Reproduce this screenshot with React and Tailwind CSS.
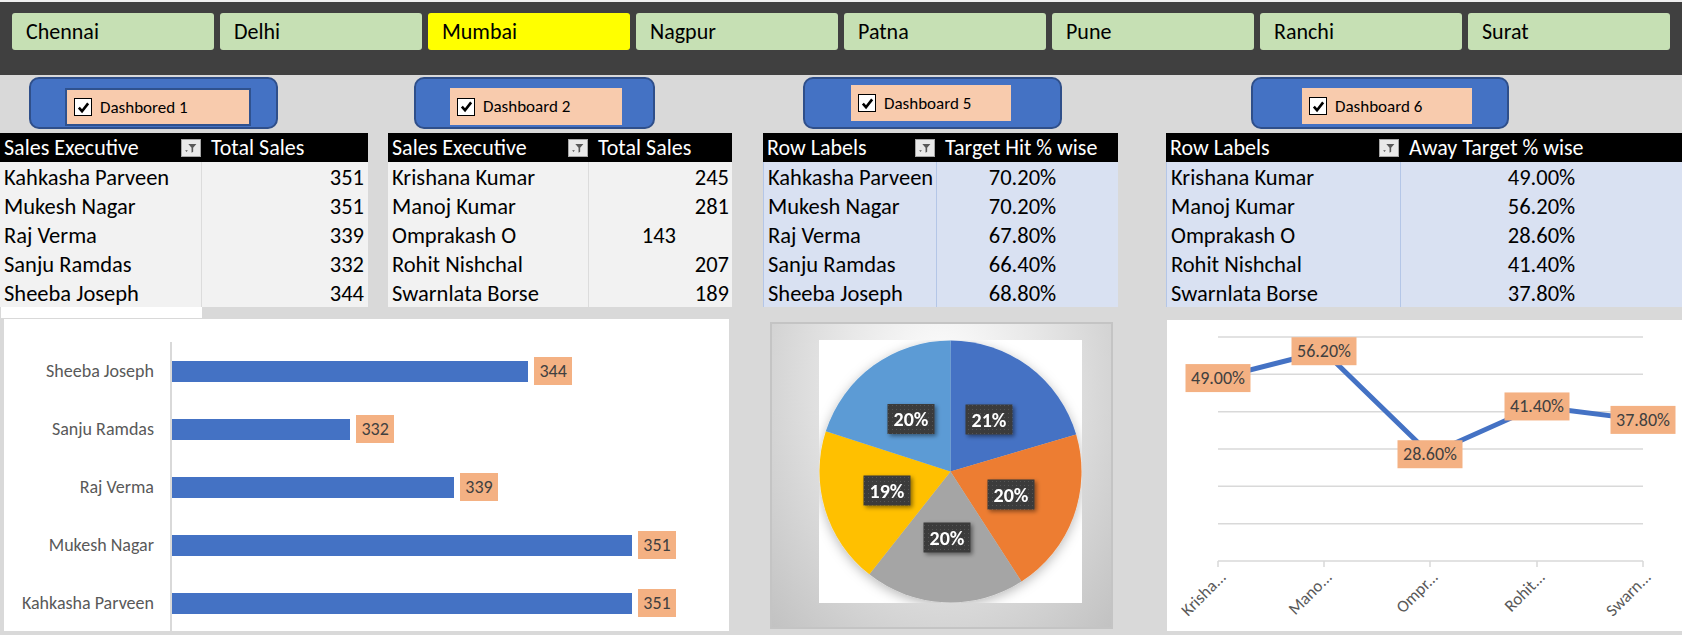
import React from 'react';

const cities = ['Chennai', 'Delhi', 'Mumbai', 'Nagpur', 'Patna', 'Pune', 'Ranchi', 'Surat'];

const dashboards = [
  { label: 'Dashbored 1', box: 'ml-[29px] w-[249px]', inner: 'ml-[34px] mt-[9px] w-[186px] h-[38px] border-2 border-[#2f528f]' },
  { label: 'Dashboard 2', box: 'ml-[136px] w-[241px]', inner: 'ml-[34px] mt-[9px] w-[172px] h-[37px]' },
  { label: 'Dashboard 5', box: 'ml-[148px] w-[259px]', inner: 'ml-[46px] mt-[6px] w-[160px] h-[36px]' },
  { label: 'Dashboard 6', box: 'ml-[189px] w-[258px]', inner: 'ml-[49px] mt-[9px] w-[170px] h-[36px]' },
];

const sales1 = [
  ['Kahkasha Parveen', 351],
  ['Mukesh Nagar', 351],
  ['Raj Verma', 339],
  ['Sanju Ramdas', 332],
  ['Sheeba Joseph', 344],
];
const sales2 = [
  ['Krishana Kumar', 245],
  ['Manoj Kumar', 281],
  ['Omprakash O', 143],
  ['Rohit Nishchal', 207],
  ['Swarnlata Borse', 189],
];
const hit = [
  ['Kahkasha Parveen', '70.20%'],
  ['Mukesh Nagar', '70.20%'],
  ['Raj Verma', '67.80%'],
  ['Sanju Ramdas', '66.40%'],
  ['Sheeba Joseph', '68.80%'],
];
const away = [
  ['Krishana Kumar', 49.0],
  ['Manoj Kumar', 56.2],
  ['Omprakash O', 28.6],
  ['Rohit Nishchal', 41.4],
  ['Swarnlata Borse', 37.8],
];

const CheckBox = () => (
  <span className="flex h-[18px] w-[18px] shrink-0 items-center justify-center border border-black bg-white">
    <svg viewBox="0 0 14 14" className="h-[13px] w-[13px]">
      <path d="M2 7.2 L5.4 11 L12 2.6" fill="none" stroke="black" strokeWidth="2.8" />
    </svg>
  </span>
);

const FilterBtn = () => (
  <span className="flex h-[18px] w-[20px] shrink-0 items-center justify-center border border-[#a6a6a6] bg-[#e9e9e9]">
    <svg viewBox="0 0 20 18" className="h-[18px] w-[20px]">
      <path d="M7 4.5h9l-3.6 4.2v4.6l-1.8 1V8.7z" fill="#595959" />
      <path d="M3.5 11.5h3l-1.5 2z" fill="#595959" />
    </svg>
  </span>
);

function PivotTable({ wrap, nameW, valW, head1, head2, rows, blue, valAlign, valPad }) {
  return (
    <div className={wrap}>
      <div className="flex h-[29px] items-center bg-black text-white">
        <div className={`flex h-full items-center justify-between pl-[4px] pr-[1px] ${nameW}`}>
          <span className="whitespace-nowrap">{head1}</span>
          <FilterBtn />
        </div>
        <div className={`flex h-full items-center whitespace-nowrap pl-[9px] ${valW}`}>{head2}</div>
      </div>
      {rows.map(([name, val], i) => (
        <div
          key={name}
          className={`flex h-[29px] items-center text-[22.5px] ${blue ? 'border-l border-[#b4c6e7] bg-[#d9e1f2]' : 'bg-[#f2f2f2]'}`}
        >
          <div
            className={`flex h-full shrink-0 items-center whitespace-nowrap pl-[4px] pt-[3px] ${nameW} ${blue ? 'border-r border-[#b4c6e7]' : 'border-r border-[#dcdcdc]'}`}
          >
            {name}
          </div>
          <div
            className={`flex h-full items-center pt-[3px] ${valW} ${valAlign} ${valPad && i === 2 ? 'pr-[56px]' : valPad ? 'pr-[3px]' : ''}`}
          >
            {typeof val === 'number' && blue ? `${val.toFixed(2)}%` : val}
          </div>
        </div>
      ))}
    </div>
  );
}

function BarChart() {
  const data = [
    ['Sheeba Joseph', 344],
    ['Sanju Ramdas', 332],
    ['Raj Verma', 339],
    ['Mukesh Nagar', 351],
    ['Kahkasha Parveen', 351],
  ];
  return (
    <div className="ml-[3px] h-[314px] w-[727px] border border-[#d9d9d9] bg-white pt-[23px]">
      {data.map(([name, v]) => (
        <div key={name} className="flex h-[58px] items-center">
          <div className="w-[150px] text-right text-[18px] text-[#595959]">{name}</div>
          <div className="ml-[16px] flex h-full items-center border-l-2 border-[#d9d9d9]">
            <div className="h-[21px] bg-[#4472c4]" style={{ width: `${(v - 320) * 14.84}px` }} />
            <div className="ml-[6px] flex h-[28px] w-[38px] items-center justify-center bg-[#f4b183] text-[18px] text-[#404040]">
              {v}
            </div>
          </div>
        </div>
      ))}
    </div>
  );
}

function PieChart() {
  const vals = [351, 351, 339, 332, 344];
  const colors = ['#4472c4', '#ed7d31', '#a5a5a5', '#ffc000', '#5b9bd5'];
  const labels = [
    ['21%', 38.5, -52],
    ['20%', 60.5, 23],
    ['20%', -3.5, 66],
    ['19%', -63.5, 19],
    ['20%', -39.5, -52.5],
  ];
  const total = vals.reduce((a, b) => a + b, 0);
  const c = 131.5;
  const r = 131;
  let acc = 0;
  const slices = vals.map((v, i) => {
    const a0 = (acc / total) * Math.PI * 2;
    acc += v;
    const a1 = (acc / total) * Math.PI * 2;
    const x0 = c + r * Math.sin(a0);
    const y0 = c - r * Math.cos(a0);
    const x1 = c + r * Math.sin(a1);
    const y1 = c - r * Math.cos(a1);
    const large = a1 - a0 > Math.PI ? 1 : 0;
    return (
      <path key={i} d={`M${c} ${c} L${x0} ${y0} A${r} ${r} 0 ${large} 1 ${x1} ${y1} Z`} fill={colors[i]} />
    );
  });
  return (
    <div className="ml-[40px] mt-[4px] h-[307px] w-[343px] border-2 border-[#c4c4c4] bg-[radial-gradient(ellipse_at_50%_20%,#ffffff_0%,#e8e8e8_40%,#c2c2c2_100%)] pl-[47px] pt-[16px]">
      <div className="h-[263px] w-[263px] bg-white">
        <svg viewBox="0 0 263 263" className="h-[263px] w-[263px]">
          <defs>
            <filter id="pieShadow" x="-20%" y="-20%" width="140%" height="140%">
              <feDropShadow dx="0" dy="3" stdDeviation="6" floodColor="#000" floodOpacity="0.28" />
            </filter>
            <filter id="lblShadow" x="-30%" y="-30%" width="160%" height="160%">
              <feDropShadow dx="2" dy="2" stdDeviation="2" floodColor="#000" floodOpacity="0.45" />
            </filter>
            <pattern id="dots" width="4" height="4" patternUnits="userSpaceOnUse">
              <rect width="4" height="4" fill="#3a3a3a" />
              <rect x="1" y="1" width="1" height="1" fill="#555555" />
            </pattern>
          </defs>
          <g filter="url(#pieShadow)">{slices}</g>
          {labels.map(([t, dx, dy], i) => (
            <g key={i} filter="url(#lblShadow)">
              <rect x={c + dx - 23.5} y={c + dy - 15} width="47" height="30" fill="url(#dots)" />
              <text
                x={c + dx}
                y={c + dy + 7}
                textAnchor="middle"
                fill="#ffffff"
                fontSize="20"
                fontWeight="700"
              >
                {t}
              </text>
            </g>
          ))}
        </svg>
      </div>
    </div>
  );
}

function LineChart() {
  const xs = [51, 157, 263, 370, 476];
  const y = (v) => 241 - v * 3.733;
  const cats = ['Krisha...', 'Mano...', 'Ompr...', 'Rohit...', 'Swarn...'];
  const pts = away.map(([, v], i) => `${xs[i]},${y(v)}`).join(' ');
  return (
    <div className="ml-[54px] mt-[2px] h-[311px] w-[515px] bg-white">
      <svg viewBox="0 0 515 311" className="h-[311px] w-[515px]">
        {[0, 1, 2, 3, 4, 5].map((i) => (
          <line key={i} x1="51" x2="476" y1={17 + i * 37.33} y2={17 + i * 37.33} stroke="#d9d9d9" strokeWidth="1.5" />
        ))}
        <line x1="51" x2="476" y1="241" y2="241" stroke="#d9d9d9" strokeWidth="1.5" />
        {xs.map((x) => (
          <line key={x} x1={x} x2={x} y1="241" y2="247" stroke="#d9d9d9" strokeWidth="1.5" />
        ))}
        <polyline points={pts} fill="none" stroke="#4472c4" strokeWidth="5" strokeLinejoin="round" strokeLinecap="round" />
        {away.map(([, v], i) => (
          <g key={i}>
            <rect x={xs[i] - 32.5} y={y(v) - 14} width="65" height="28" fill="#f4b183" />
            <text x={xs[i]} y={y(v) + 6} textAnchor="middle" fontSize="18" fill="#404040">
              {v.toFixed(2)}%
            </text>
          </g>
        ))}
        {cats.map((t, i) => (
          <text
            key={t}
            x={xs[i] + 9}
            y="258"
            textAnchor="end"
            fontSize="17"
            fill="#595959"
            transform={`rotate(-45 ${xs[i] + 9} 258)`}
          >
            {t}
          </text>
        ))}
      </svg>
    </div>
  );
}

export default function App() {
  return (
    <div className="h-[635px] w-[1682px] overflow-hidden bg-[#d9d9d9] font-['Carlito','Lato',sans-serif] text-[22px] leading-none text-black">
      {/* slicer band */}
      <div className="flex h-[75px] gap-[6px] border-t-2 border-[#efefef] bg-[#404040] px-[12px] pt-[11px]">
        {cities.map((city) => (
          <div
            key={city}
            className={`flex h-[37px] flex-1 items-center rounded-[3px] pl-[14px] ${city === 'Mumbai' ? 'bg-[#ffff00]' : 'bg-[#c6e0b4]'}`}
          >
            {city}
          </div>
        ))}
      </div>

      {/* dashboard toggles */}
      <div className="flex h-[58px] pt-[2px]">
        {dashboards.map((d) => (
          <div key={d.label} className={`h-[52px] rounded-[10px] border-2 border-[#2f4f8a] bg-[#4472c4] ${d.box}`}>
            <div className={`flex items-center gap-[8px] bg-[#f8cbad] pl-[7px] text-[17px] ${d.inner}`}>
              <CheckBox />
              <span>{d.label}</span>
            </div>
          </div>
        ))}
      </div>

      {/* pivot tables */}
      <div className="flex">
        <PivotTable
          wrap="w-[368px]"
          nameW="w-[202px]"
          valW="w-[166px]"
          head1="Sales Executive"
          head2="Total Sales"
          rows={sales1}
          valAlign="justify-end pr-[4px]"
        />
        <PivotTable
          wrap="ml-[20px] w-[344px]"
          nameW="w-[201px]"
          valW="w-[143px]"
          head1="Sales Executive"
          head2="Total Sales"
          rows={sales2}
          valAlign="justify-end"
          valPad
        />
        <PivotTable
          wrap="ml-[31px] w-[355px]"
          nameW="w-[173px]"
          valW="w-[182px]"
          head1="Row Labels"
          head2="Target Hit % wise"
          rows={hit}
          blue
          valAlign="justify-center pr-[10px]"
        />
        <PivotTable
          wrap="ml-[48px] w-[516px]"
          nameW="w-[234px]"
          valW="w-[282px]"
          head1="Row Labels"
          head2="Away Target % wise"
          rows={away}
          blue
          valAlign="justify-center"
        />
      </div>
      <div className="h-[11px] w-[202px] border-l border-[#d9d9d9] bg-white" />

      {/* charts */}
      <div className="flex items-start">
        <BarChart />
        <PieChart />
        <LineChart />
      </div>
    </div>
  );
}
